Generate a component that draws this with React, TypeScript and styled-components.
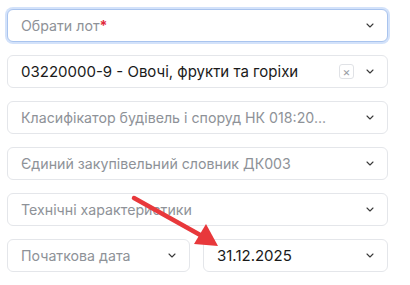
import styled, { createGlobalStyle } from "styled-components";

const GlobalStyle = createGlobalStyle`
  html, body {
    margin: 0;
    padding: 0;
    background: #fff;
  }
  body {
    font-family: Inter, "Noto Sans", sans-serif;
  }
`;

const Chevron = () => (
  <svg width="8" height="5" viewBox="0 0 8 5" fill="none">
    <path d="M1 1l3 3 3-3" stroke="#3a3a3a" strokeWidth="1.1" strokeLinecap="round" strokeLinejoin="round" />
  </svg>
);

const App = () => {
  return (
    <>
      <GlobalStyle />
      <Form>
        <Select focused>
          <Placeholder>
            Обрати лот<Required>*</Required>
          </Placeholder>
          <Chevron />
        </Select>
        <Select>
          <Value>03220000-9 - Овочі, фрукти та горіхи</Value>
          <ClearButton>×</ClearButton>
          <Chevron />
        </Select>
        <Select>
          <Placeholder>Класифікатор будівель і споруд НК 018:20...</Placeholder>
          <Chevron />
        </Select>
        <Select>
          <Placeholder>Єдиний закупівельний словник ДК003</Placeholder>
          <Chevron />
        </Select>
        <Select>
          <Placeholder>Технічні характеристики</Placeholder>
          <Chevron />
        </Select>
        <DateRow>
          <Select>
            <Placeholder>Початкова дата</Placeholder>
            <Chevron />
          </Select>
          <Select>
            <Value>31.12.2025</Value>
            <Chevron />
          </Select>
        </DateRow>
        <Arrow width="100" height="60" viewBox="0 0 100 60">
          <line x1="4" y1="4" x2="72" y2="42" stroke="#e8383b" strokeWidth="4.5" strokeLinecap="round" />
          <polygon points="88,52 64,50 76,30" fill="#e8383b" />
        </Arrow>
      </Form>
    </>
  );
};

export default App;

const Form = styled.div`
  position: relative;
  width: 381px;
  padding: 9px 0 0 7px;
  display: flex;
  flex-direction: column;
  gap: 13px;
`;

const Select = styled.div<{ focused?: boolean }>`
  height: 33px;
  box-sizing: border-box;
  display: flex;
  align-items: center;
  gap: 12px;
  padding: 0 13px 0 13px;
  border: 1px solid ${(p) => (p.focused ? "#a9c4ee" : "#e4e6ea")};
  border-radius: 6px;
  background: #fff;
  box-shadow: ${(p) => (p.focused ? "0 0 0 2px #d3e2fa" : "none")};
  min-width: 0;
`;

const Placeholder = styled.div`
  flex: 1;
  min-width: 0;
  font-size: 14.2px;
  color: #8e9298;
  white-space: nowrap;
  overflow: hidden;
`;

const Value = styled(Placeholder)`
  font-size: 15px;
  color: #1a1a1a;
`;

const Required = styled.span`
  color: #e0283a;
  font-weight: 700;
`;

const ClearButton = styled.div`
  width: 15px;
  height: 15px;
  box-sizing: border-box;
  border: 1px solid #e0e2e6;
  border-radius: 3px;
  display: flex;
  align-items: center;
  justify-content: center;
  font-size: 12px;
  line-height: 1;
  color: #9a9ea5;
`;

const DateRow = styled.div`
  display: grid;
  grid-template-columns: 183px 1fr;
  gap: 13px;
`;

const Arrow = styled.svg`
  position: absolute;
  left: 130px;
  top: 194px;
  pointer-events: none;
`;
